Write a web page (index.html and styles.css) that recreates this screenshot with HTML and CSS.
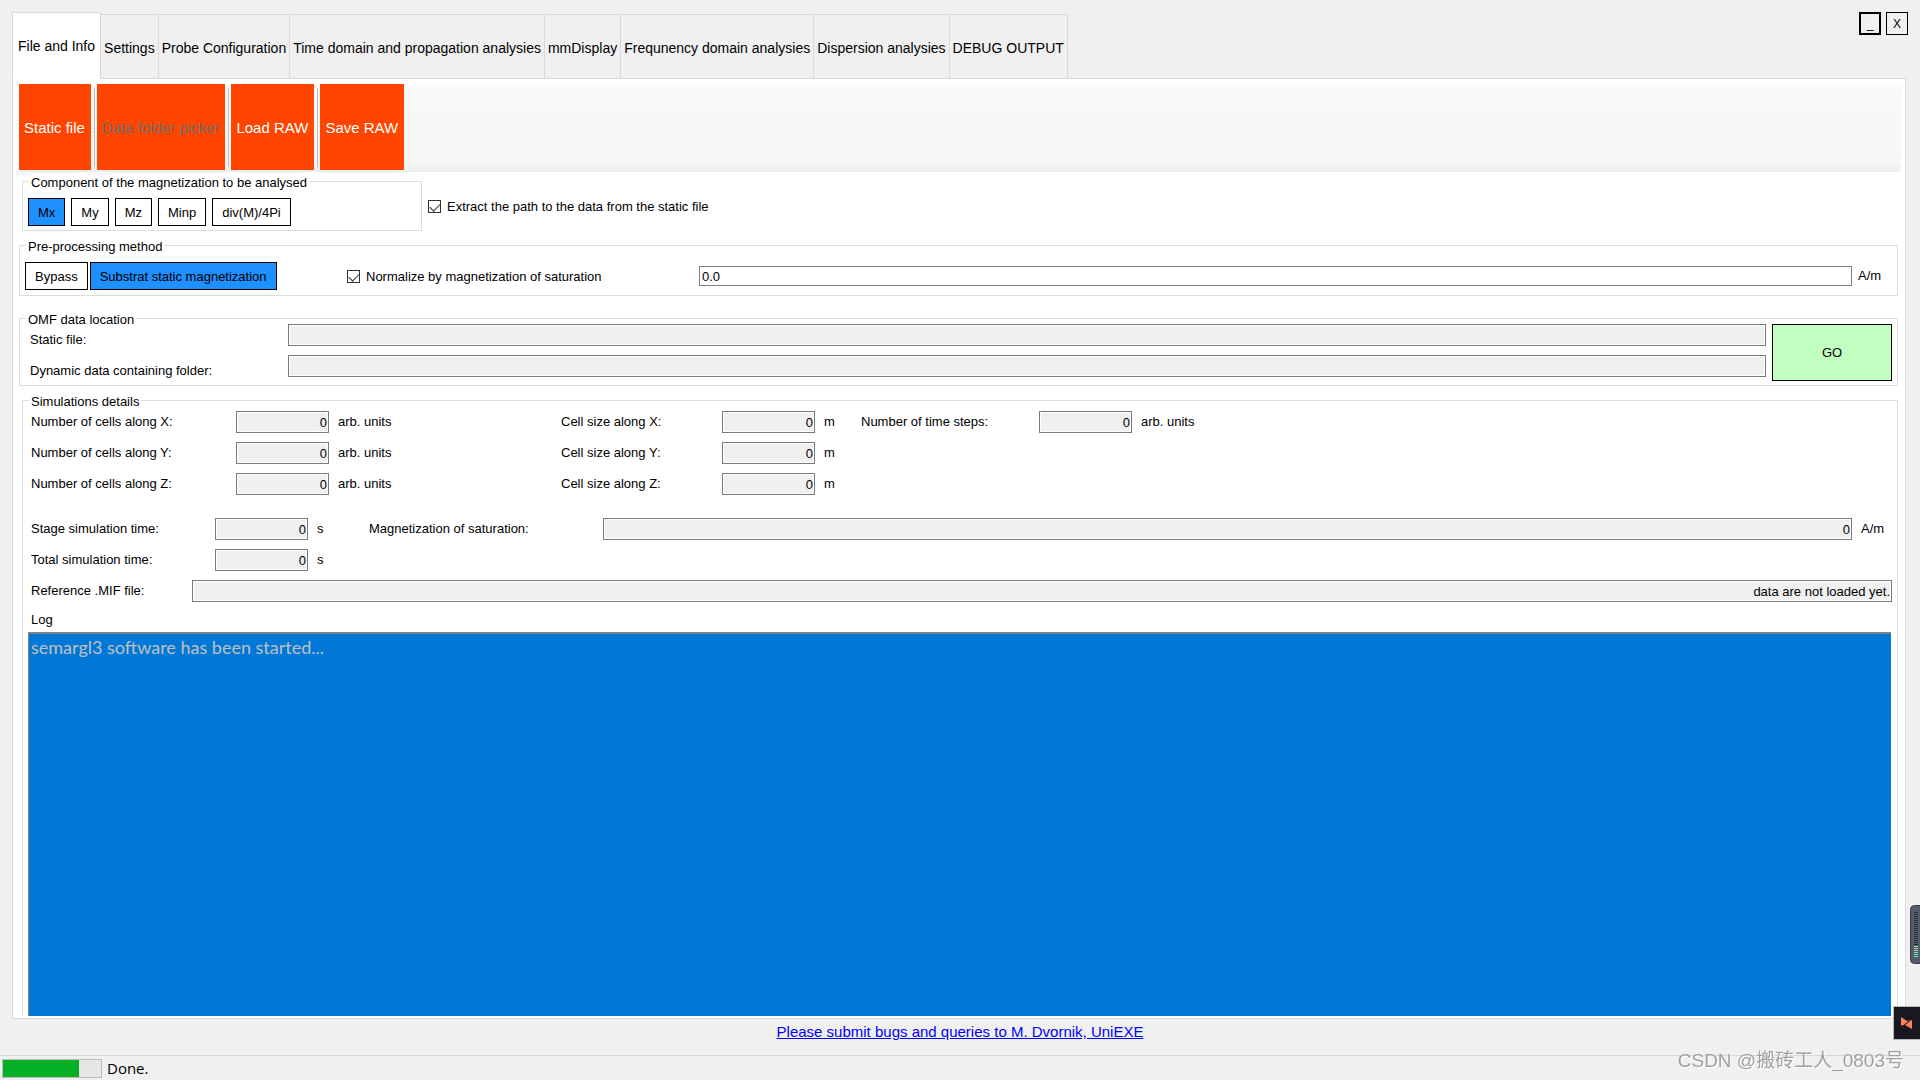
FILE: index.html
```html
<!DOCTYPE html>
<html lang="en">
<head>
<meta charset="utf-8">
<title>semargl3</title>
<link rel="stylesheet" href="styles.css">
</head>
<body>
<div class="window">
  <header class="top">
    <nav class="tabs" aria-label="Sections">
      <button class="tab active">File and Info</button>
      <button class="tab">Settings</button>
      <button class="tab">Probe Configuration</button>
      <button class="tab">Time domain and propagation analysies</button>
      <button class="tab">mmDisplay</button>
      <button class="tab">Frequnency domain analysies</button>
      <button class="tab">Dispersion analysies</button>
      <button class="tab">DEBUG OUTPUT</button>
    </nav>
    <div class="window-controls">
      <button class="control focused">_</button>
      <button class="control">X</button>
    </div>
  </header>

  <main class="page">
    <div class="toolbar">
      <button class="tool">Static file</button>
      <span class="separator"></span>
      <button class="tool" disabled>Data folder picker</button>
      <span class="separator"></span>
      <button class="tool">Load RAW</button>
      <span class="separator"></span>
      <button class="tool">Save RAW</button>
    </div>

    <div class="component-row">
      <section class="group component">
        <h2 class="title">Component of the magnetization to be analysed</h2>
        <div class="choices spaced">
          <button class="choice selected">Mx</button>
          <button class="choice">My</button>
          <button class="choice">Mz</button>
          <button class="choice">Minp</button>
          <button class="choice">div(M)/4Pi</button>
        </div>
      </section>
      <label class="check"><input type="checkbox" checked>Extract the path to the data from the static file</label>
    </div>

    <section class="group preprocessing">
      <h2 class="title">Pre-processing method</h2>
      <div class="method">
        <div class="choices">
          <button class="choice">Bypass</button>
          <button class="choice selected">Substrat static magnetization</button>
        </div>
        <label class="check"><input type="checkbox" checked>Normalize by magnetization of saturation</label>
        <input class="editable" type="text" value="0.0" aria-label="Saturation value">
        <span>A/m</span>
      </div>
    </section>

    <section class="group location">
      <h2 class="title">OMF data location</h2>
      <div class="paths">
        <label for="static">Static file:</label>
        <input class="field" id="static" type="text" readonly>
        <label for="dynamic">Dynamic data containing folder:</label>
        <input class="field" id="dynamic" type="text" readonly>
      </div>
      <button class="go">GO</button>
    </section>

    <section class="group details">
      <h2 class="title">Simulations details</h2>
      <div class="cells">
        <label for="nx">Number of cells along X:</label>
        <input class="field" id="nx" type="text" value="0" readonly>
        <span>arb. units</span>
        <label for="sx">Cell size along X:</label>
        <input class="field" id="sx" type="text" value="0" readonly>
        <span>m</span>
        <label for="steps">Number of time steps:</label>
        <input class="field" id="steps" type="text" value="0" readonly>
        <span>arb. units</span>
        <label class="first" for="ny">Number of cells along Y:</label>
        <input class="field" id="ny" type="text" value="0" readonly>
        <span>arb. units</span>
        <label for="sy">Cell size along Y:</label>
        <input class="field" id="sy" type="text" value="0" readonly>
        <span>m</span>
        <label class="first" for="nz">Number of cells along Z:</label>
        <input class="field" id="nz" type="text" value="0" readonly>
        <span>arb. units</span>
        <label for="sz">Cell size along Z:</label>
        <input class="field" id="sz" type="text" value="0" readonly>
        <span>m</span>
      </div>
      <div class="times">
        <label for="stage">Stage simulation time:</label>
        <input class="field" id="stage" type="text" value="0" readonly>
        <span>s</span>
        <label for="ms">Magnetization of saturation:</label>
        <input class="field" id="ms" type="text" value="0" readonly>
        <span>A/m</span>
        <label class="first" for="total">Total simulation time:</label>
        <input class="field" id="total" type="text" value="0" readonly>
        <span>s</span>
      </div>
      <div class="reference">
        <label for="mif">Reference .MIF file:</label>
        <input class="field" id="mif" type="text" value="data are not loaded yet." readonly>
      </div>
      <label class="log-label" for="log">Log</label>
      <textarea class="log" id="log" readonly>semargl3 software has been started...</textarea>
    </section>
  </main>

  <div class="contact"><a href="#bugs">Please submit bugs and queries to M. Dvornik, UniEXE</a></div>
  <footer class="status">
    <div class="progress" role="progressbar" aria-valuenow="78" aria-label="Progress"><div class="bar" style="width:78%"></div></div>
    <span>Done.</span>
  </footer>
</div>

<svg class="meter" width="10" height="60" viewBox="0 0 10 60" aria-hidden="true">
  <rect x="0.5" y="0.5" width="16" height="58" rx="4" fill="#565b6b" stroke="#383b47"/>
  <path d="M6 7V41" stroke="#2b2d36" stroke-width="4" stroke-dasharray="1 1"/>
  <path d="M6 41V47" stroke="#8be8a4" stroke-width="4" stroke-dasharray="1 1"/>
  <path d="M6 47V53" stroke="#62e6c4" stroke-width="4" stroke-dasharray="1 1"/>
</svg>
<svg class="badge" width="27" height="34" viewBox="0 0 27 34" aria-hidden="true">
  <rect x="0.5" y="0.5" width="27" height="33" fill="#171820" stroke="#b8b8b8"/>
  <path d="M8 11L14 15L8 20ZM19 14V23L12 19Z" fill="#ff8261"/>
  <path d="M8 19.500L14 15L19 14L12 19Z" fill="#ff8261"/>
  <path d="M10 20L17 14.500" stroke="#171820"/>
</svg>
<div class="watermark">CSDN @搬砖工人_0803号</div>
</body>
</html>
```

FILE: styles.css
```css
* { box-sizing: border-box; }
body {
  margin: 0;
  background: #f0f0f0;
  color: #000;
  font: 13px/16px "Liberation Sans", Arial, sans-serif;
}
button, input, textarea { font: inherit; color: inherit; margin: 0; border-radius: 0; }
button { padding: 0; }
.window { display: flex; flex-direction: column; min-height: 100vh; }

.top { display: flex; justify-content: space-between; align-items: flex-start; padding: 12px 12px 0; }
.tabs { display: flex; align-items: flex-end; margin-bottom: -1px; position: relative; }
.tab {
  height: 65px;
  padding: 2px 3px 0;
  background: #f0f0f0;
  border: 1px solid #d9d9d9;
  border-left: 0;
  font-size: 14px;
  white-space: nowrap;
}
.tab.active { height: 67px; padding: 0 5px; background: #fff; border-left: 1px solid #d9d9d9; border-bottom-color: #fff; }
.window-controls { display: flex; gap: 5px; }
.control { width: 22px; height: 23px; background: #f0f0f0; border: 1px solid #000; font-size: 12px; }
.control.focused { border-width: 2px; }

.page {
  flex: 1;
  display: flex;
  flex-direction: column;
  margin: 0 14px 0 12px;
  padding: 4px 4px 2px 6px;
  background: #fff;
  border: 1px solid #d9d9d9;
}
.toolbar {
  display: flex;
  align-items: flex-start;
  height: 89px;
  padding-top: 1px;
  background: linear-gradient(#fdfdfd, #f8f8f8 12px, #f7f7f7 76px, #eee);
  border-radius: 0 3px 3px 0;
}
.tool { height: 86px; padding: 2px 6px 0 5px; background: #ff4500; border: 0; color: #fff; font-size: 15px; }
.tool:disabled { color: #6d6d6d; }
.separator { width: 1px; height: 79px; margin: 4px 2px 0 3px; background: #bdbdbd; }

.group { position: relative; border: 1px solid #dcdcdc; }
.title {
  position: absolute;
  top: -7px;
  left: 6px;
  margin: 0;
  padding: 0 2px;
  background: #fff;
  font-size: 13px;
  font-weight: 400;
  white-space: nowrap;
}
.component-row { display: flex; gap: 6px; margin: 9px 0 0 3px; }
.component { width: 400px; height: 50px; padding: 16px 5px 0; }
.choices { display: flex; gap: 2px; }
.choices.spaced { gap: 6px; }
.choice { height: 28px; padding: 1px 9px 0; background: #fff; border: 1px solid #000; }
.choice.selected { background: #1e90ff; }
.check { display: flex; align-items: center; gap: 6px; padding-top: 1px; }
.check input {
  appearance: none;
  width: 13px;
  height: 13px;
  border: 1px solid #333;
  background: #fff;
  display: grid;
  place-items: center;
}
.check input:checked::before {
  content: "";
  width: 9px;
  height: 5px;
  margin-bottom: 2px;
  border: solid #333;
  border-width: 0 0 1px 1px;
  transform: rotate(-45deg);
}
.preprocessing { margin: 14px 3px 0 0; height: 51px; padding: 16px 11px 0 5px; }
.method { display: grid; grid-template-columns: 322px 352px 1fr 34px; align-items: center; }
.method > span { padding-left: 6px; }
.editable { width: 100%; height: 20px; padding: 0 2px; border: 1px solid #7f7f8c; background: #fff; }
.field {
  width: 100%;
  height: 22px;
  padding: 0 1px;
  border: 1px solid #7a7a7a;
  background: #f0f0f0;
  box-shadow: inset 0 0 0 1px #fff;
  text-align: right;
}
.location { display: flex; gap: 6px; margin: 22px 3px 0 0; padding: 5px 5px 4px 10px; }
.paths { flex: 1; display: grid; grid-template-columns: 258px 1fr; row-gap: 9px; align-content: start; }
.paths label { padding-top: 8px; height: 22px; }
.go { width: 120px; height: 57px; background: #c0ffc0; border: 1px solid #000; }

.details {
  flex: 1;
  display: flex;
  flex-direction: column;
  margin: 14px 3px 0 3px;
  padding: 10px 5px 0;
  border-bottom: 0;
}
.cells, .times, .reference { display: grid; align-items: center; row-gap: 9px; padding-left: 3px; }
.cells { grid-template-columns: 205px 93px 232px 161px 93px 46px 178px 93px 1fr; }
.cells span, .times span { padding-left: 9px; }
.first { grid-column: 1; }
.times { grid-template-columns: 184px 93px 61px 234px 1fr 40px; margin-top: 23px; }
.reference { grid-template-columns: 161px 1fr; margin-top: 9px; }
.log-label { padding: 10px 3px 4px; }
.log {
  flex: 1;
  min-height: 240px;
  margin-right: 1px;
  padding: 2px;
  resize: none;
  outline: 0;
  border: solid #808080;
  border-width: 2px 0 0 1px;
  background: #0078d7;
  color: #c0c0c0;
  font: 18px/22px Lato, sans-serif;
}
.contact { height: 36px; padding-top: 4px; text-align: center; font-size: 15px; line-height: 18px; }
.contact a { color: #00f; }
.status {
  display: flex;
  align-items: center;
  gap: 5px;
  height: 25px;
  padding: 0 2px;
  border-top: 1px solid #d7d7d7;
  font: 15px/20px "Open Sans", sans-serif;
}
.progress { width: 100px; height: 19px; border: 1px solid #bcbcbc; background: #e6e6e6; }
.bar { height: 100%; background: #06b025; }
.meter { position: fixed; right: 0; bottom: 115px; }
.badge { position: fixed; right: 0; bottom: 40px; }
.watermark {
  position: fixed;
  right: 16px;
  bottom: 6px;
  color: #a0a0a0;
  font: 19px/26px "Liberation Sans", "Noto Sans CJK SC", sans-serif;
  text-shadow: 1px 1px 0 #fff;
}
```
